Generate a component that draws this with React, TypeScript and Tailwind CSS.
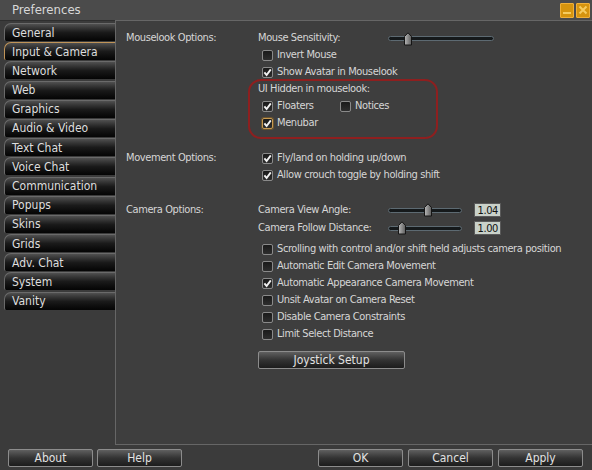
import React from 'react';

const tabs = ['General', 'Input & Camera', 'Network', 'Web', 'Graphics', 'Audio & Video', 'Text Chat', 'Voice Chat', 'Communication', 'Popups', 'Skins', 'Grids', 'Adv. Chat', 'System', 'Vanity'];

const Tab = ({ label, active }: { label: string; active?: boolean }) => (
    <div className={`h-[18px] w-[111px] shrink-0 rounded-tl-[7px] rounded-bl-[2px] border-t border-l pl-[7px] flex items-center text-[12px] text-[#dedede] bg-linear-to-b from-[#505050] via-[#1a1a1a] to-[#050505] ${active ? 'border-[#c09458]' : 'border-[#6a6a6a]'}`}>
        {label}
    </div>
);

const Check = ({ checked, focus }: { checked?: boolean; focus?: boolean }) => (
    <span className={`w-[11px] h-[11px] shrink-0 rounded-[2px] border flex items-center justify-center bg-linear-to-b from-[#1a1a1a] to-[#2e2e2e] ${focus ? 'border-[#c89a50] shadow-[0_0_0_1px_#6a5430]' : 'border-[#8a8a8a]'}`}>
        {checked && (
            <svg width="9" height="9" viewBox="0 0 9 9">
                <path d="M1.4 4.4 L3.6 7 L7.8 1.4" stroke="#f2f2f2" strokeWidth="1.9" fill="none" />
            </svg>
        )}
    </span>
);

const CheckRow = ({ label, checked, focus }: { label: string; checked?: boolean; focus?: boolean }) => (
    <div className="h-[17px] flex items-center gap-[4px] pl-[4px]">
        <Check checked={checked} focus={focus} />
        <span>{label}</span>
    </div>
);

const Slider = ({ width, pos }: { width: number; pos: number }) => (
    <div className="relative h-[14px] flex items-center" style={{ width }}>
        <div className="w-full h-[5px] rounded-full bg-[#15191b] border border-[#5d6a72]" />
        <svg className="absolute top-0" style={{ left: pos - 5 }} width="10" height="14" viewBox="0 0 10 14">
            <defs>
                <linearGradient id="thumb" x1="0" y1="0" x2="1" y2="0">
                    <stop offset="0" stopColor="#b8b8b8" />
                    <stop offset="1" stopColor="#5c5c5c" />
                </linearGradient>
            </defs>
            <path d="M1.5 4.5 L5 0.8 L8.5 4.5 L8.5 13 L1.5 13 Z" fill="url(#thumb)" stroke="#151515" strokeWidth="1" />
        </svg>
    </div>
);

const Btn = ({ label, w }: { label: string; w: string }) => (
    <div className={`${w} h-[18px] rounded-[2px] border border-[#8c8c8c] flex items-center justify-center text-[12px] tracking-normal text-[#e2e2e2] bg-linear-to-b from-[#606060] via-[#333333] to-[#1c1c1c]`}>
        {label}
    </div>
);

const ValueBox = ({ value }: { value: string }) => (
    <div className="ml-[12px] w-[27px] h-[14px] border border-[#5a5a5a] bg-[#c9d1c9] text-[#111] text-[11px] leading-none flex items-center justify-end pr-[2px]">
        {value}
    </div>
);

export default function App() {
    return (
        <div className="w-[592px] h-[470px] bg-[#3b3b3b] flex flex-col overflow-hidden font-['DejaVu_Sans_Condensed','DejaVu_Sans',sans-serif] text-[11px] text-[#d6d6d6]">
            {/* title bar */}
            <div className="h-[20px] shrink-0 bg-[#4b4b4b] flex items-center justify-between pl-[12px] pr-[2px]">
                <span className="text-[13px] text-[#d8d8d8]">Preferences</span>
                <div className="flex gap-[2px]">
                    <div className="w-[14px] h-[15px] rounded-[1px] bg-[#d6940e] border border-[#f0b03a] flex items-end justify-center pb-[3px]">
                        <div className="w-[8px] h-[2px] bg-[#f6cc60]" />
                    </div>
                    <div className="w-[14px] h-[15px] rounded-[1px] bg-[#d6940e] border border-[#f0b03a] flex items-center justify-center">
                        <svg width="10" height="10" viewBox="0 0 10 10">
                            <path d="M1.5 1.5 L8.5 8.5 M8.5 1.5 L1.5 8.5" stroke="#f6cc60" strokeWidth="2" />
                        </svg>
                    </div>
                </div>
            </div>

            <div className="flex flex-1 min-h-0">
                {/* tabs */}
                <div className="w-[115px] shrink-0 pl-[4px] pt-[2px] flex flex-col gap-[1.2px] border-t border-[#2e2e2e]">
                    {tabs.map((t) => (
                        <Tab key={t} label={t} active={t === 'Input & Camera'} />
                    ))}
                </div>

                {/* panel */}
                <div className="flex-1 h-[425px] bg-[#3e3e3e] border-t border-l border-b border-[#666] pl-[10px] pt-[9px] tracking-[-0.4px]">
                    {/* mouselook */}
                    <div className="flex">
                        <div className="w-[132px] h-[17px] flex items-center">Mouselook Options:</div>
                        <div className="flex flex-col">
                            <div className="h-[17px] flex items-center">
                                <span className="w-[130px]">Mouse Sensitivity:</span>
                                <Slider width={106} pos={20} />
                            </div>
                            <CheckRow label="Invert Mouse" />
                            <CheckRow label="Show Avatar in Mouselook" checked />
                            <div className="relative">
                                <div className="h-[17px] flex items-center">UI Hidden in mouselook:</div>
                                <div className="h-[17px] flex items-center">
                                    <div className="w-[82px] flex items-center gap-[4px] pl-[4px]">
                                        <Check checked />
                                        <span>Floaters</span>
                                    </div>
                                    <div className="flex items-center gap-[4px]">
                                        <Check />
                                        <span>Notices</span>
                                    </div>
                                </div>
                                <CheckRow label="Menubar" checked focus />
                                <div className="absolute left-[-10px] top-[-2px] w-[190px] h-[60px] rounded-[13px] border-[2px] border-[#8e1f1f]" />
                            </div>
                        </div>
                    </div>

                    {/* movement */}
                    <div className="flex mt-[18px]">
                        <div className="w-[132px] h-[17px] flex items-center">Movement Options:</div>
                        <div className="flex flex-col">
                            <CheckRow label="Fly/land on holding up/down" checked />
                            <CheckRow label="Allow crouch toggle by holding shift" checked />
                        </div>
                    </div>

                    {/* camera */}
                    <div className="flex mt-[17px]">
                        <div className="w-[132px] h-[18px] flex items-center">Camera Options:</div>
                        <div className="flex flex-col">
                            <div className="h-[18px] flex items-center">
                                <span className="w-[130px]">Camera View Angle:</span>
                                <Slider width={74} pos={40} />
                                <ValueBox value="1.04" />
                            </div>
                            <div className="h-[18px] flex items-center">
                                <span className="w-[130px]">Camera Follow Distance:</span>
                                <Slider width={74} pos={14} />
                                <ValueBox value="1.00" />
                            </div>
                            <div className="mt-[4px]">
                                <CheckRow label="Scrolling with control and/or shift held adjusts camera position" />
                                <CheckRow label="Automatic Edit Camera Movement" />
                                <CheckRow label="Automatic Appearance Camera Movement" checked />
                                <CheckRow label="Unsit Avatar on Camera Reset" />
                                <CheckRow label="Disable Camera Constraints" />
                                <CheckRow label="Limit Select Distance" />
                            </div>
                            <div className="mt-[8px]">
                                <Btn label="Joystick Setup" w="w-[147px]" />
                            </div>
                        </div>
                    </div>
                </div>
            </div>

            {/* bottom buttons */}
            <div className="h-[26px] shrink-0 flex items-start pt-[5px] px-[8px]">
                <div className="flex gap-[4px]">
                    <Btn label="About" w="w-[85px]" />
                    <Btn label="Help" w="w-[85px]" />
                </div>
                <div className="flex gap-[5px] ml-auto pr-[1px]">
                    <Btn label="OK" w="w-[85px]" />
                    <Btn label="Cancel" w="w-[85px]" />
                    <Btn label="Apply" w="w-[85px]" />
                </div>
            </div>
        </div>
    );
}
